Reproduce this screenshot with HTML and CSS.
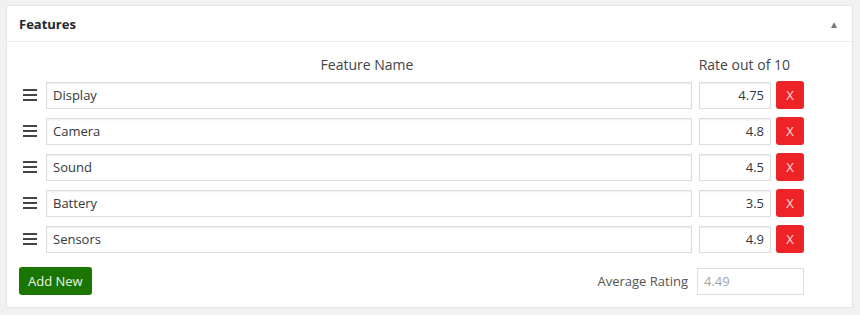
FILE: index.html
```html
<!DOCTYPE html>
<html lang="en">
<head>
    <meta charset="UTF-8">
    <title>Features</title>
    <link rel="stylesheet" href="styles.css">
</head>
<body>
    <div class="postbox">
        <div class="postbox-header">
            <h2>Features</h2>
            <span class="toggle">&#9650;</span>
        </div>
        <div class="inside">
            <div class="col-heads">
                <span class="head-name">Feature Name</span>
                <span class="head-rate">Rate out of 10</span>
            </div>

            <div class="feature-row">
                <span class="handle"><i></i><i></i><i></i></span>
                <input class="name" type="text" value="Display">
                <input class="rate" type="text" value="4.75">
                <button class="remove">X</button>
            </div>
            <div class="feature-row">
                <span class="handle"><i></i><i></i><i></i></span>
                <input class="name" type="text" value="Camera">
                <input class="rate" type="text" value="4.8">
                <button class="remove">X</button>
            </div>
            <div class="feature-row">
                <span class="handle"><i></i><i></i><i></i></span>
                <input class="name" type="text" value="Sound">
                <input class="rate" type="text" value="4.5">
                <button class="remove">X</button>
            </div>
            <div class="feature-row">
                <span class="handle"><i></i><i></i><i></i></span>
                <input class="name" type="text" value="Battery">
                <input class="rate" type="text" value="3.5">
                <button class="remove">X</button>
            </div>
            <div class="feature-row">
                <span class="handle"><i></i><i></i><i></i></span>
                <input class="name" type="text" value="Sensors">
                <input class="rate" type="text" value="4.9">
                <button class="remove">X</button>
            </div>

            <div class="footer">
                <button class="add-new">Add New</button>
                <label class="avg">
                    Average Rating
                    <input type="text" value="4.49" readonly>
                </label>
            </div>
        </div>
    </div>
</body>
</html>
```

FILE: styles.css
```css
* {
    box-sizing: border-box;
}

body {
    margin: 0;
    padding: 5px 7px 0 6px;
    background: #f1f1f1;
    font-family: "Segoe UI", "Open Sans", "Noto Sans", sans-serif;
    font-size: 13px;
    color: #32373c;
}

.postbox {
    background: #fff;
    border: 1px solid #e5e5e5;
    box-shadow: 0 1px 1px rgba(0,0,0,0.04);
    height: 303px;
}

.postbox-header {
    display: flex;
    align-items: center;
    justify-content: space-between;
    height: 36px;
    padding: 0 12px 0 12px;
    border-bottom: 1px solid #eee;
}

.postbox-header h2 {
    margin: 0;
    font-size: 13px;
    font-weight: 700;
    color: #23282d;
}

.toggle {
    font-size: 10px;
    color: #72777c;
    margin-right: 1px;
}

.inside {
    padding: 13px 48px 0 12px;
}

.col-heads {
    display: flex;
    height: 22px;
    line-height: 20px;
    font-size: 14px;
    color: #444;
}

.head-name {
    flex: 1;
    text-align: center;
    padding-left: 21px;
}

.head-rate {
    width: 110px;
    text-align: right;
    padding-right: 14px;
}

.feature-row {
    display: flex;
    align-items: center;
    height: 36px;
}

.handle {
    width: 27px;
    display: flex;
    flex-direction: column;
    gap: 3px;
    padding-left: 4px;
}

.handle i {
    display: block;
    width: 14px;
    height: 2px;
    background: #444;
}

input[type="text"] {
    height: 27px;
    border: 1px solid #ddd;
    box-shadow: inset 0 1px 2px rgba(0,0,0,0.07);
    font-family: inherit;
    font-size: 13px;
    color: #32373c;
    padding: 0 6px;
    margin: 0;
}

.name {
    flex: 1;
    min-width: 0;
}

.rate {
    width: 72px;
    margin-left: 7px !important;
    text-align: right;
}

.remove {
    width: 28px;
    height: 28px;
    margin-left: 5px;
    border: none;
    border-radius: 3px;
    background: #ee2328;
    color: #fbdcdc;
    font-family: inherit;
    font-size: 13px;
    padding: 0;
    cursor: pointer;
}

.footer {
    display: flex;
    justify-content: space-between;
    align-items: center;
    margin-top: 10px;
}

.add-new {
    height: 28px;
    padding: 0 9px;
    border: none;
    border-radius: 3px;
    background: #1a7600;
    color: #e9f3e6;
    font-family: inherit;
    font-size: 13px;
    cursor: pointer;
}

.avg {
    display: flex;
    align-items: center;
    gap: 9px;
    color: #555;
}

.avg input {
    width: 107px;
    color: #a0a5aa;
    box-shadow: none;
    text-align: left;
}
```
